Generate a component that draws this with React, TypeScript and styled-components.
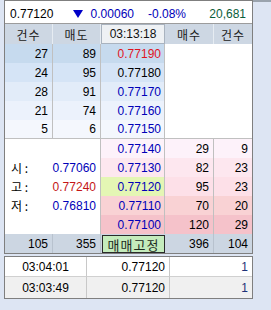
import React from 'react';
import styled, { createGlobalStyle } from 'styled-components';

const Global = createGlobalStyle`
  html, body { margin: 0; padding: 0; background: #dde5f3; }
  body {
    font-family: "Liberation Sans", "Noto Sans CJK KR", sans-serif;
    font-size: 12px;
    color: #000;
  }
`;

const BLUE = '#0000b8';
const RED = '#e0141e';
const DARKRED = '#c41616';
const GREEN = '#0b5e3a';
const GRID = '#c0c0c0';

const Page = styled.div`
  position: relative;
  width: 271px;
  height: 310px;
  box-sizing: border-box;
  padding-left: 4px;
  background: #dde5f3;
  display: flex;
  flex-direction: column;
  gap: 2px;
`;

const CornerStrip = styled.div`
  position: absolute;
  top: 0;
  right: 0;
  width: 18px;
  height: 2px;
  background: #9aa3ad;
`;

const Panel = styled.div`
  width: 249px;
  box-sizing: border-box;
  border: 1px solid #7f7f7f;
  background: #fff;
  display: flex;
  flex-direction: column;
`;

const TopBar = styled.div`
  box-sizing: content-box;
  border-bottom: 1px solid #9c9c9c;
  display: flex;
  align-items: center;
  padding-top: 4px;
  height: 18px;
  background: #fff;
`;

const TopField = styled.span<{ $w: number; $align?: string; $color?: string; $pl?: number }>`
  width: ${p => p.$w}px;
  flex: none;
  display: flex;
  align-items: center;
  justify-content: ${p => (p.$align === 'left' ? 'flex-start' : 'flex-end')};
  padding-left: ${p => p.$pl ?? 0}px;
  box-sizing: border-box;
  color: ${p => p.$color ?? '#000'};
  gap: 8px;
  white-space: nowrap;
`;

const Grid = styled.div`
  display: grid;
  grid-template-columns: 48px 48px 64px 49px 38px;
  grid-template-rows: 20px repeat(10, 19px) 19px;
`;

const Cell = styled.div<{
  $bg?: string;
  $color?: string;
  $align?: 'left' | 'center' | 'right' | 'between';
  $divider?: string;
  $bottom?: boolean;
  $span?: number;
  $pr?: number;
  $pl?: number;
}>`
  grid-column: span ${p => p.$span ?? 1};
  background: ${p => p.$bg ?? '#fff'};
  color: ${p => p.$color ?? '#000'};
  display: flex;
  align-items: center;
  justify-content: ${p =>
    p.$align === 'left'
      ? 'flex-start'
      : p.$align === 'center'
      ? 'center'
      : p.$align === 'between'
      ? 'space-between'
      : 'flex-end'};
  padding: 0 ${p => p.$pr ?? 4}px 0 ${p => p.$pl ?? 4}px;
  box-sizing: border-box;
  border-right: ${p => (p.$divider ? `1px solid ${p.$divider}` : 'none')};
  border-bottom: ${p => (p.$bottom ? `1px solid ${GRID}` : 'none')};
  white-space: nowrap;
  overflow: hidden;
`;

const HeadCell = styled(Cell)`
  background: #cdd7e3;
  color: #1a1a1a;
  font-family: "Noto Sans CJK KR", sans-serif;
  font-size: 12px;
  letter-spacing: 1px;
`;

const TimeCell = styled.div`
  background: #eef1f4;
  border: 1px solid #a9b3bf;
  box-sizing: border-box;
  display: flex;
  align-items: center;
  justify-content: center;
  color: #111;
`;

const Label = styled.span`
  font-family: "Noto Sans CJK KR", sans-serif;
  font-size: 12px;
  padding-left: 1px;
`;

const SumCell = styled(Cell)`
  background: #ccd6e2;
`;

const ButtonCell = styled.div`
  background: #ccd6e2;
  padding: 1px 0 0 1px;
  box-sizing: border-box;
  display: flex;
`;

const FixButton = styled.button`
  flex: 1;
  margin: 0;
  padding: 0;
  border: 1px solid #2a2a2a;
  background: #c4ecbc;
  color: #1c2a1c;
  font-family: "Noto Sans CJK KR", sans-serif;
  font-size: 13px;
  letter-spacing: 1px;
  display: flex;
  align-items: center;
  justify-content: center;
  cursor: pointer;
`;

const TradeTable = styled.div`
  width: 249px;
  box-sizing: border-box;
  border: 1px solid #7f7f7f;
  display: grid;
  grid-template-columns: 82px 83px 82px;
`;

const TradeCell = styled.div<{ $bg: string; $align: 'center' | 'right'; $color?: string; $last?: boolean; $h: number; $bottom?: boolean }>`
  height: ${p => p.$h}px;
  box-sizing: border-box;
  background: ${p => p.$bg};
  color: ${p => p.$color ?? '#000'};
  display: flex;
  align-items: center;
  justify-content: ${p => (p.$align === 'center' ? 'center' : 'flex-end')};
  padding: 0 4px;
  border-right: ${p => (p.$last ? 'none' : '1px solid #c8c8c8')};
  border-bottom: ${p => (p.$bottom ? '1px solid #d0d0d0' : 'none')};
`;

const Arrow = () => (
  <svg width="10" height="8" viewBox="0 0 10 8">
    <polygon points="0,0 10,0 5,8" fill="#0000c8" />
  </svg>
);

const sellRows = [
  { cnt: 27, qty: 89, price: '0.77190', color: RED, bg: '#c6daee' },
  { cnt: 24, qty: 95, price: '0.77180', color: '#000', bg: '#d5e4f6' },
  { cnt: 28, qty: 91, price: '0.77170', color: BLUE, bg: '#e2ecf9' },
  { cnt: 21, qty: 74, price: '0.77160', color: BLUE, bg: '#ecf2fc' },
  { cnt: 5, qty: 6, price: '0.77150', color: BLUE, bg: '#f4f7fd' },
];

const buyRows: {
  price: string;
  qty: number;
  cnt: number;
  bg: string;
  priceBg?: string;
  info?: { label: string; value: string; color: string };
}[] = [
  { price: '0.77140', qty: 29, cnt: 9, bg: '#fdf2fa' },
  { price: '0.77130', qty: 82, cnt: 23, bg: '#fde7ef', info: { label: '시 :', value: '0.77060', color: BLUE } },
  { price: '0.77120', qty: 95, cnt: 23, bg: '#fde0e8', priceBg: '#e4f6b4', info: { label: '고 :', value: '0.77240', color: DARKRED } },
  { price: '0.77110', qty: 70, cnt: 20, bg: '#f9d2d4', info: { label: '저 :', value: '0.76810', color: BLUE } },
  { price: '0.77100', qty: 120, cnt: 29, bg: '#f5c2ca' },
];

const trades = [
  { time: '03:04:01', price: '0.77120', vol: 1, bg: '#ffffff' },
  { time: '03:03:49', price: '0.77120', vol: 1, bg: '#f0f0f0' },
];

export default function App() {
  return (
    <Page>
      <Global />
      <CornerStrip />
      <Panel>
        <TopBar>
          <TopField $w={60} $align="left" $pl={5}>0.77120</TopField>
          <TopField $w={69} $color={BLUE}>
            <Arrow />
            <span>0.00060</span>
          </TopField>
          <TopField $w={52} $color={BLUE}>-0.08%</TopField>
          <TopField $w={60} $color={GREEN}>20,681</TopField>
        </TopBar>
        <Grid>
          <HeadCell $align="center" $divider="#e6ecf2">건수</HeadCell>
          <HeadCell $align="center" $divider="#e6ecf2">매도</HeadCell>
          <TimeCell>03:13:18</TimeCell>
          <HeadCell $align="center" $divider="#e6ecf2">매수</HeadCell>
          <HeadCell $align="center">건수</HeadCell>

          {sellRows.map((r, i) => {
            const last = i === sellRows.length - 1;
            return (
              <React.Fragment key={r.price}>
                <Cell $bg={r.bg} $divider={GRID} $bottom={last}>{r.cnt}</Cell>
                <Cell $bg={r.bg} $divider={GRID} $bottom={last}>{r.qty}</Cell>
                <Cell $bg={r.bg} $divider={GRID} $bottom={last} $color={r.color} $pr={3}>{r.price}</Cell>
                <Cell $span={2} $bottom={last} />
              </React.Fragment>
            );
          })}

          {buyRows.map(r => (
            <React.Fragment key={r.price}>
              <Cell $span={2} $divider={GRID} $align="between" $pl={5} $pr={4}>
                {r.info && (
                  <>
                    <Label>{r.info.label}</Label>
                    <span style={{ color: r.info.color }}>{r.info.value}</span>
                  </>
                )}
              </Cell>
              <Cell $bg={r.priceBg ?? r.bg} $divider={GRID} $color={BLUE} $pr={3}>{r.price}</Cell>
              <Cell $bg={r.bg} $divider={GRID}>{r.qty}</Cell>
              <Cell $bg={r.bg}>{r.cnt}</Cell>
            </React.Fragment>
          ))}

          <SumCell $divider="#b8c2ce">105</SumCell>
          <SumCell $divider="#b8c2ce">355</SumCell>
          <ButtonCell>
            <FixButton>매매고정</FixButton>
          </ButtonCell>
          <SumCell $divider="#b8c2ce">396</SumCell>
          <SumCell>104</SumCell>
        </Grid>
      </Panel>
      <TradeTable>
        {trades.map((t, i) => {
          const h = i === 0 ? 20 : 21;
          const bottom = i === 0;
          return (
            <React.Fragment key={t.time}>
              <TradeCell $bg={t.bg} $align="center" $h={h} $bottom={bottom}>{t.time}</TradeCell>
              <TradeCell $bg={t.bg} $align="right" $h={h} $bottom={bottom}>{t.price}</TradeCell>
              <TradeCell $bg={t.bg} $align="right" $h={h} $bottom={bottom} $last $color="#1e3278">{t.vol}</TradeCell>
            </React.Fragment>
          );
        })}
      </TradeTable>
    </Page>
  );
}
